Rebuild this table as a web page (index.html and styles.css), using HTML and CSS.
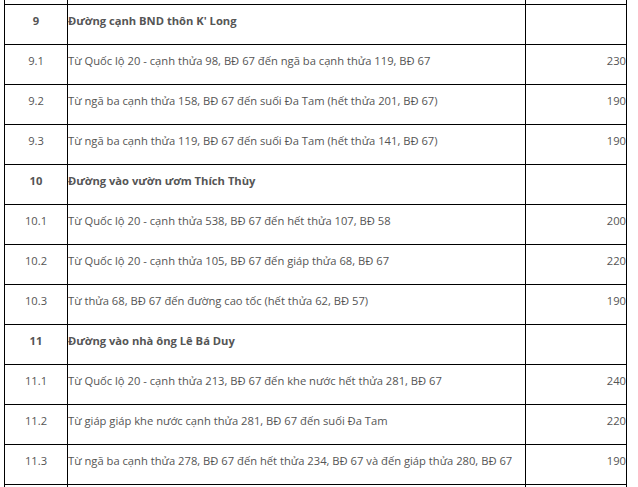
FILE: index.html
```html
<!DOCTYPE html>
<html lang="vi">
<head>
<meta charset="utf-8">
<link rel="stylesheet" href="styles.css">
</head>
<body>
<table class="price">
  <colgroup><col class="c-no"><col class="c-name"><col class="c-val"></colgroup>
  <tr class="stub"><td></td><td></td><td></td></tr>
  <tr class="group"><td class="no">9</td><td class="name">Đường cạnh BND thôn K' Long</td><td class="val"></td></tr>
  <tr><td class="no">9.1</td><td class="name">Từ Quốc lộ 20 - cạnh thửa 98, BĐ 67 đến ngã ba cạnh thửa 119, BĐ 67</td><td class="val">230</td></tr>
  <tr><td class="no">9.2</td><td class="name">Từ ngã ba cạnh thửa 158, BĐ 67 đến suối Đa Tam (hết thửa 201, BĐ 67)</td><td class="val">190</td></tr>
  <tr><td class="no">9.3</td><td class="name">Từ ngã ba cạnh thửa 119, BĐ 67 đến suối Đa Tam (hết thửa 141, BĐ 67)</td><td class="val">190</td></tr>
  <tr class="group"><td class="no">10</td><td class="name">Đường vào vườn ươm Thích Thùy</td><td class="val"></td></tr>
  <tr><td class="no">10.1</td><td class="name">Từ Quốc lộ 20 - cạnh thửa 538, BĐ 67 đến hết thửa 107, BĐ 58</td><td class="val">200</td></tr>
  <tr><td class="no">10.2</td><td class="name">Từ Quốc lộ 20 - cạnh thửa 105, BĐ 67 đến giáp thửa 68, BĐ 67</td><td class="val">220</td></tr>
  <tr><td class="no">10.3</td><td class="name">Từ thửa 68, BĐ 67 đến đường cao tốc (hết thửa 62, BĐ 57)</td><td class="val">190</td></tr>
  <tr class="group"><td class="no">11</td><td class="name">Đường vào nhà ông Lê Bá Duy</td><td class="val"></td></tr>
  <tr><td class="no">11.1</td><td class="name">Từ Quốc lộ 20 - cạnh thửa 213, BĐ 67 đến khe nước hết thửa 281, BĐ 67</td><td class="val">240</td></tr>
  <tr><td class="no">11.2</td><td class="name">Từ giáp giáp khe nước cạnh thửa 281, BĐ 67 đến suối Đa Tam</td><td class="val">220</td></tr>
  <tr><td class="no">11.3</td><td class="name">Từ ngã ba cạnh thửa 278, BĐ 67 đến hết thửa 234, BĐ 67 và đến giáp thửa 280, BĐ 67</td><td class="val">190</td></tr>
  <tr class="tail"><td></td><td></td><td></td></tr>
</table>
</body>
</html>
```
FILE: styles.css
```css
html, body {
  margin: 0;
  padding: 0;
  background: #fff;
}
body {
  padding-left: 4px;
  overflow: hidden;
  height: 487px;
}
.price {
  border-collapse: collapse;
  table-layout: fixed;
  width: 622px;
  font-family: "Open Sans", "Noto Sans", sans-serif;
  font-size: 11.2px;
  line-height: 18px;
  color: #555;
}
.c-no { width: 63px; }
.c-name { width: 458px; }
.c-val { width: 101px; }
.price td {
  border: 1px solid #000;
  height: 40px;
  padding: 7px 0 0 0;
  vertical-align: top;
  box-sizing: border-box;
  white-space: nowrap;
}
.price tr.stub td {
  height: 4px;
  padding: 0;
  border-top: none;
}
.price tr.tail td {
  height: 20px;
  padding: 0;
}
.price td.no { text-align: center; }
.price td.name { text-align: left; }
.price td.val { text-align: right; }
.price tr.group td { font-weight: bold; }
```
